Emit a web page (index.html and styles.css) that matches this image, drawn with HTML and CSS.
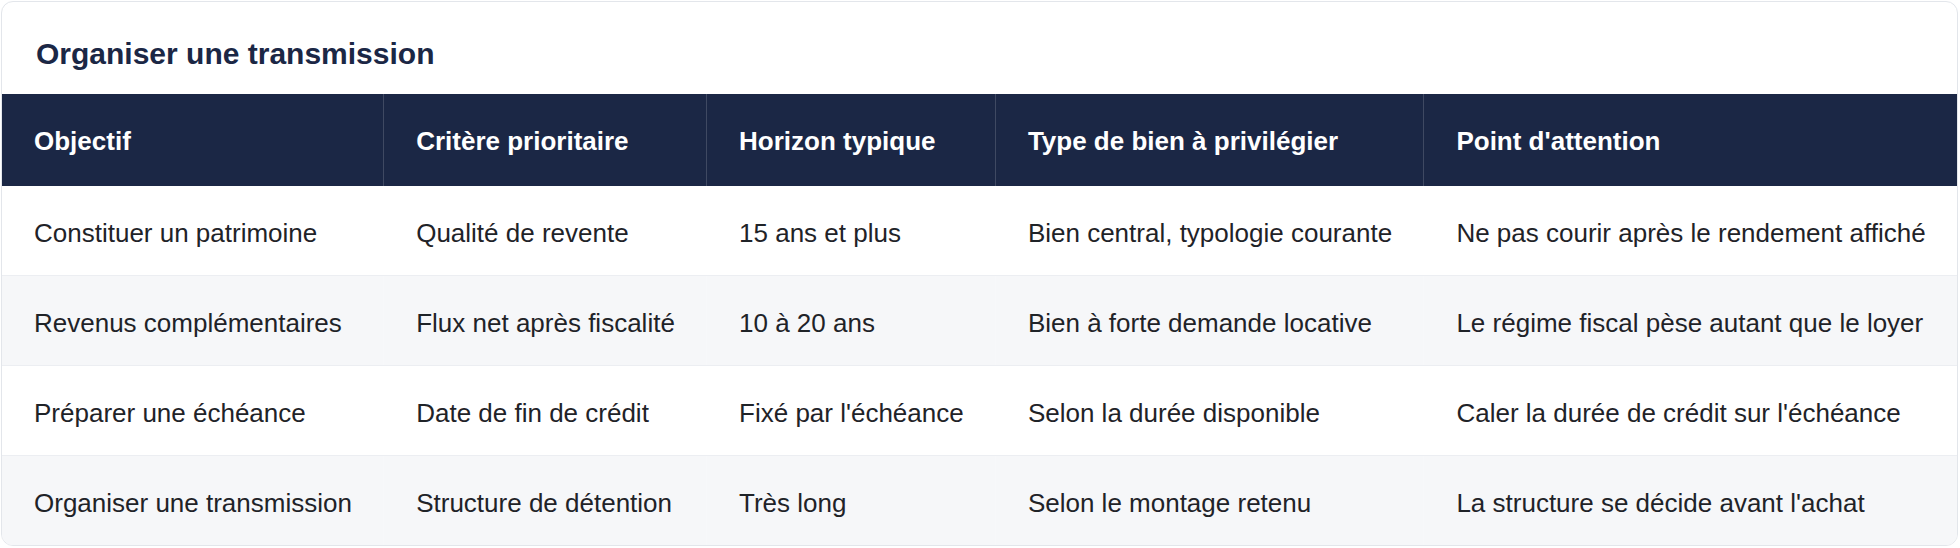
FILE: index.html
```html
<!DOCTYPE html>
<html lang="fr">
<head>
<meta charset="utf-8">
<title>Organiser une transmission</title>
<link rel="stylesheet" href="styles.css">
</head>
<body>
<div class="page">
  <section class="card">
    <h2 class="card-title">Organiser une transmission</h2>
    <table class="grid">
      <thead>
        <tr>
          <th>Objectif</th>
          <th>Critère prioritaire</th>
          <th>Horizon typique</th>
          <th>Type de bien à privilégier</th>
          <th>Point d'attention</th>
        </tr>
      </thead>
      <tbody>
        <tr>
          <td>Constituer un patrimoine</td>
          <td>Qualité de revente</td>
          <td>15 ans et plus</td>
          <td>Bien central, typologie courante</td>
          <td>Ne pas courir après le rendement affiché</td>
        </tr>
        <tr>
          <td>Revenus complémentaires</td>
          <td>Flux net après fiscalité</td>
          <td>10 à 20 ans</td>
          <td>Bien à forte demande locative</td>
          <td>Le régime fiscal pèse autant que le loyer</td>
        </tr>
        <tr>
          <td>Préparer une échéance</td>
          <td>Date de fin de crédit</td>
          <td>Fixé par l'échéance</td>
          <td>Selon la durée disponible</td>
          <td>Caler la durée de crédit sur l'échéance</td>
        </tr>
        <tr>
          <td>Organiser une transmission</td>
          <td>Structure de détention</td>
          <td>Très long</td>
          <td>Selon le montage retenu</td>
          <td>La structure se décide avant l'achat</td>
        </tr>
      </tbody>
    </table>
  </section>
</div>
</body>
</html>
```

FILE: styles.css
```css
html, body {
  margin: 0;
  padding: 0;
  background: #ffffff;
}

body {
  font-family: "Liberation Sans", Arial, Helvetica, sans-serif;
  color: #1f2328;
}

.page {
  padding: 1px 2px 1px 1px;
}

.card {
  border: 1px solid #e3e6eb;
  border-radius: 12px;
  overflow: hidden;
  background: #ffffff;
}

.card-title {
  margin: 0;
  padding: 33px 34px 22px;
  font-size: 30px;
  line-height: 37px;
  font-weight: 700;
  color: #1b2745;
}

.grid {
  width: 100%;
  border-collapse: collapse;
  font-size: 26px;
  line-height: 40px;
}

.grid th,
.grid td {
  text-align: left;
  padding: 27px 31px 22px 32px;
  white-space: nowrap;
  border-right: 1px solid rgba(255, 255, 255, 0.16);
}

.grid th {
  padding-bottom: 25px;
}

.grid th:last-child,
.grid td:last-child {
  border-right: none;
}

.grid thead th {
  background: #1b2745;
  color: #ffffff;
  font-weight: 700;
}

.grid tbody td {
  font-weight: 400;
  color: #1f2328;
  border-bottom: 1px solid #eceef2;
}

.grid tbody tr:nth-child(even) td {
  background: #f6f7f9;
}

.grid tbody tr:last-child td {
  border-bottom: none;
}
```
